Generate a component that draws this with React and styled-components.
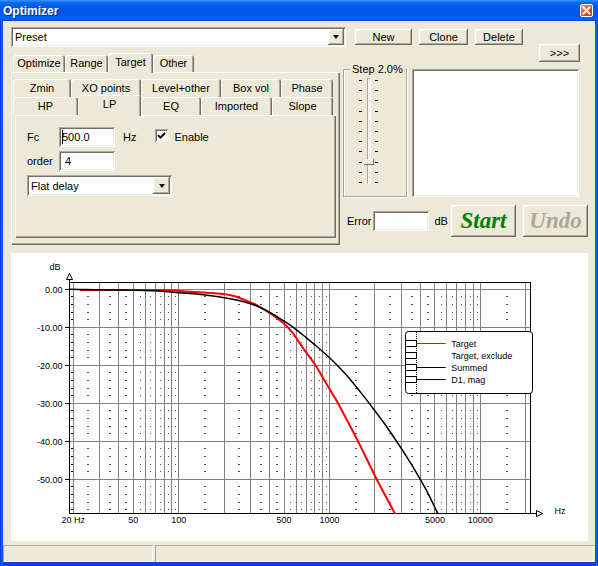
import React from 'react'
import styled, { createGlobalStyle } from 'styled-components'

const GlobalStyle = createGlobalStyle`
  html, body { margin: 0; padding: 0; background: #ffffff; }
  body { font-family: "Liberation Sans", Arial, sans-serif; font-size: 11px; color: #000; }
  * { box-sizing: border-box; }
`

// classic 3D edges
const raised = `
  box-shadow: inset -1px -1px 0 #716f64, inset 1px 1px 0 #ffffff, inset -2px -2px 0 #aca899, inset 2px 2px 0 #f1efe2;
`
const sunken = `
  box-shadow: inset 1px 1px 0 #aca899, inset -1px -1px 0 #ffffff, inset 2px 2px 0 #716f64, inset -2px -2px 0 #f1efe2;
`

const Window = styled.div`
  width: 598px;
  height: 566px;
  display: flex;
  flex-direction: column;
  background: linear-gradient(to right, #0831d9 0, #166aee 2px, #0842d6 3px, #0842d6 595px, #166aee 596px, #0831d9 598px);
`

const TitleBar = styled.div`
  height: 21px;
  flex: none;
  display: flex;
  align-items: center;
  justify-content: space-between;
  padding: 0 5px 0 3px;
  background: linear-gradient(to bottom, #3d95ff 0%, #0a6af5 12%, #0058ee 35%, #0055e8 70%, #0064fb 88%, #0043d8 100%);
  color: #fff;
  font-size: 12px;
  font-weight: bold;
  text-shadow: 1px 1px 0 #0a2a8a;
`

const CloseButton = styled.div`
  width: 13px;
  height: 13px;
  border: 1px solid #fff;
  border-radius: 2px;
  background: linear-gradient(135deg, #f29a7a 0%, #e0532a 45%, #c43a12 100%);
  display: flex;
  align-items: center;
  justify-content: center;
`

const Client = styled.div`
  flex: 1;
  margin: 0 3px 4px;
  background: #ece9d8;
  display: flex;
  flex-direction: column;
`

const Top = styled.div`
  display: flex;
  height: 224px;
  padding: 6px 0 0 8px;
`

const LeftCol = styled.div`
  width: 332px;
  display: flex;
  flex-direction: column;
`

const RightCol = styled.div`
  width: 245px;
  display: flex;
  flex-direction: column;
`

const ComboBox = styled.div`
  width: ${p => p.$w}px;
  height: ${p => p.$h}px;
  flex: none;
  background: #fff;
  display: flex;
  align-items: stretch;
  padding: 2px;
  ${sunken}
`

const ComboText = styled.span`
  flex: 1;
  display: flex;
  align-items: center;
  padding-left: 2px;
`

const DropButton = styled.div`
  width: ${p => p.$w || 16}px;
  background: #ece9d8;
  display: flex;
  align-items: center;
  justify-content: center;
  ${raised}
`

const DownArrow = styled.span`
  width: 0;
  height: 0;
  border-left: 3.5px solid transparent;
  border-right: 3.5px solid transparent;
  border-top: 4px solid #000;
`

const TabStrip = styled.div`
  display: flex;
  align-items: flex-end;
  height: ${p => p.$h}px;
  margin: ${p => p.$m || '0 0 0 2px'};
`

const Tab = styled.div`
  width: ${p => p.$w}px;
  height: ${p => p.$active ? p.$h + 3 : p.$h}px;
  flex: none;
  display: flex;
  align-items: center;
  justify-content: center;
  padding-bottom: ${p => p.$active ? 3 : 1}px;
  background: #ece9d8;
  border-radius: 3px 3px 0 0;
  box-shadow: inset 1px 1px 0 #ffffff, inset -1px 0 0 #716f64, inset -2px 0 0 #aca899;
  position: ${p => p.$active ? 'relative' : 'static'};
  z-index: ${p => p.$active ? 1 : 'auto'};
  margin-bottom: ${p => p.$active ? -1 : 0}px;
`

const Page = styled.div`
  width: ${p => p.$w}px;
  height: ${p => p.$h}px;
  padding: ${p => p.$pad};
  background: #ece9d8;
  box-shadow: inset 1px 1px 0 #ffffff, inset -1px -1px 0 #716f64, inset -2px -2px 0 #aca899;
`

const FieldRow = styled.div`
  display: flex;
  align-items: center;
  height: ${p => p.$h || 20}px;
  margin-top: ${p => p.$mt || 0}px;
`

const Label = styled.span`
  width: ${p => p.$w ? `${p.$w}px` : 'auto'};
  flex: none;
  margin-left: ${p => p.$ml || 0}px;
`

const TextField = styled.div`
  width: ${p => p.$w}px;
  height: 20px;
  flex: none;
  display: flex;
  align-items: center;
  padding-left: ${p => p.$pl || 3}px;
  margin-left: ${p => p.$ml || 0}px;
  background: #fff;
  ${sunken}
`

const Caret = styled.span`
  width: 1px;
  height: 14px;
  margin-right: -1px;
  background: #000;
`

const CheckBox = styled.div`
  width: 13px;
  height: 13px;
  flex: none;
  align-self: flex-start;
  margin: 2px 0 0 19px;
  background: #fff;
  display: flex;
  align-items: center;
  justify-content: center;
  ${sunken}
`

const Button = styled.button`
  width: ${p => p.$w}px;
  height: ${p => p.$h}px;
  flex: none;
  padding: 0;
  border: none;
  background: #ece9d8;
  font-family: "Liberation Sans", Arial, sans-serif;
  font-size: 11px;
  color: #000;
  margin-left: ${p => p.$ml || 0}px;
  ${raised}
`

const BigButton = styled(Button)`
  font-family: "Liberation Serif", "Times New Roman", serif;
  font-size: 23px;
  font-weight: bold;
  font-style: italic;
  color: ${p => p.$disabled ? '#aca899' : '#008000'};
`

const ButtonRow = styled.div`
  display: flex;
  gap: 7px;
  margin-top: 2px;
  padding-left: 12px;
`

const MoreRow = styled.div`
  display: flex;
  justify-content: flex-end;
  margin-top: -1px;
  padding-right: 8px;
`

const MiddleRow = styled.div`
  display: flex;
  height: 134px;
  margin-top: 1px;
`

const GroupBox = styled.div`
  width: 64px;
  height: 128px;
  margin-top: 6px;
  border: 1px solid #aca899;
  box-shadow: inset 1px 1px 0 #fff, 1px 1px 0 #fff;
`

const GroupTitle = styled.div`
  width: fit-content;
  height: 12px;
  line-height: 12px;
  margin: -7px 0 0 6px;
  padding: 0 2px;
  background: #ece9d8;
`

const Slider = styled.div`
  display: flex;
  height: 106px;
  margin-top: 3px;
  padding-left: 15px;
`

const TickCol = styled.div`
  width: 3px;
  display: flex;
  flex-direction: column;
  justify-content: space-between;
  padding: 2px 0 1px;
  margin-left: ${p => p.$ml || 0}px;
`

const Tick = styled.span`
  height: 1px;
  background: #000;
`

const Track = styled.div`
  width: 4px;
  margin-left: 5px;
  position: relative;
  background: #f4f3ee;
  border-left: 1px solid #aca899;
  border-top: 1px solid #aca899;
  border-right: 1px solid #fff;
  border-bottom: 1px solid #fff;
`

const Thumb = styled.div`
  position: absolute;
  top: ${p => p.$top}px;
  left: -4px;
  width: 10px;
  height: 6px;
  background: #ece9d8;
  box-shadow: inset -1px -1px 0 #716f64, inset 1px 1px 0 #fff;
`

const ListBox = styled.div`
  width: 167px;
  height: 128px;
  margin: 6px 0 0 5px;
  background: #fff;
  ${sunken}
`

const ErrorRow = styled.div`
  display: flex;
  align-items: center;
  height: 32px;
  margin-top: 8px;
  padding-left: 4px;
`

const ChartPanel = styled.div`
  width: 577px;
  height: 288px;
  margin: 8px 0 0 8px;
  background: #fff;
`

const StatusBar = styled.div`
  display: flex;
  height: 17px;
  margin-top: 4px;
  padding-right: 1px;
`

const StatusPane = styled.div`
  width: ${p => p.$w ? `${p.$w}px` : 'auto'};
  flex: ${p => p.$w ? 'none' : 1};
  margin-left: ${p => p.$ml || 0}px;
  box-shadow: inset 1px 1px 0 #aca899, inset -1px -1px 0 #ffffff;
`

/* ---------- chart ---------- */

const fx = f => 62.3 + 150.8 * Math.log10(f / 20)
const fy = db => 36.3 - 3.8 * db
const px = v => Math.floor(v) + 0.5

const PL = 58, PT = 29, PR = 519, PB = 260

const majorFreqs = []
for (const d of [10, 100, 1000]) for (let m = 2; m <= 10; m++) majorFreqs.push(m * d)
majorFreqs.push(20000)

const summed = [
  [18.8, 0], [60, -0.3], [100, -0.9], [150, -1.5], [220, -2.5], [300, -3.8], [360, -5.1],
  [420, -6.5], [490, -8.2], [575, -10], [700, -12.7], [850, -15.5], [1000, -18], [1150, -20.4],
  [1350, -23.4], [1600, -27], [1900, -30.8], [2300, -35.2], [2761, -39.8], [3300, -44.5],
  [3929, -49.5], [4500, -53.7], [5106, -58.2], [5800, -62.4],
]

const target = [
  [22.1, -0.2], [70, -0.2], [106, -0.5], [137, -0.8], [217, -1.5], [281, -3.0], [344, -4.6],
  [422, -6.8], [491, -8.8], [528, -10], [573, -11.6], [668, -15.5], [808, -20], [907, -23.4],
  [1057, -27.8], [1139, -30], [1545, -40], [2056, -50], [2706, -58.9], [3000, -62],
]

const toPath = data => {
  const p = data.map(([f, db]) => [fx(f), fy(db)])
  const r = v => v.toFixed(2)
  let d = `M${r(p[0][0])},${r(p[0][1])}`
  for (let i = 0; i < p.length - 1; i++) {
    const p0 = p[i - 1] || p[i], p1 = p[i], p2 = p[i + 1], p3 = p[i + 2] || p2
    const c1x = p1[0] + (p2[0] - p0[0]) / 6, c1y = p1[1] + (p2[1] - p0[1]) / 6
    const c2x = p2[0] - (p3[0] - p1[0]) / 6, c2y = p2[1] - (p3[1] - p1[1]) / 6
    d += ` C${r(c1x)},${r(c1y)} ${r(c2x)},${r(c2y)} ${r(p2[0])},${r(p2[1])}`
  }
  return d
}

const legendItems = [
  { name: 'Target', color: '#ff0000' },
  { name: 'Target, exclude', color: null },
  { name: 'Summed', color: '#000' },
  { name: 'D1, mag', color: '#000' },
]

const Chart = () => {
  const vLines = majorFreqs.map(f => px(fx(f)))
  const hLines = [0, -10, -20, -30, -40, -50].map(db => px(fy(db)))

  const minorRows = []
  for (let k = 1; k <= 29; k++) if (k % 5) minorRows.push(px(fy(-2 * k)))

  let dashes = ''
  majorFreqs.slice(0, -1).forEach((f, i) => {
    const next = majorFreqs[i + 1]
    const w = fx(next) - fx(f) < 12 ? 1 : 2
    const x = Math.round(fx((f + next) / 2)) - (w === 2 ? 1 : 0)
    minorRows.forEach(y => { dashes += `M${x},${y}h${w}` })
  })
  let axisTicks = ''
  minorRows.forEach(y => { axisTicks += `M60,${y}h2` })
  hLines.forEach(y => { axisTicks += `M54,${y}h4.5` })

  const xLabels = [[20, '20 Hz'], [50, '50'], [100, '100'], [500, '500'], [1000, '1000'], [5000, '5000'], [10000, '10000']]
  const yLabels = ['0.00', '-10.00', '-20.00', '-30.00', '-40.00', '-50.00']

  return (
    <svg width="577" height="288" viewBox="0 0 577 288" style={{ display: 'block' }}
      fontFamily='"Liberation Sans", Arial, sans-serif' fontSize="9">
      <defs>
        <clipPath id="plot">
          <rect x={PL} y={PT} width={PR - PL + 1} height={PB - PT + 1} />
        </clipPath>
      </defs>
      <g stroke="#808080" strokeWidth="1" shapeRendering="crispEdges">
        {vLines.map((x, i) => <line key={i} x1={x} y1={PT} x2={x} y2={PB} />)}
        {hLines.map((y, i) => <line key={i} x1={PL} y1={y} x2={PR} y2={y} />)}
      </g>
      <path d={dashes} stroke="#505050" strokeWidth="1" shapeRendering="crispEdges" />
      <path d={axisTicks} stroke="#000" strokeWidth="1" shapeRendering="crispEdges" />
      <g stroke="#000" strokeWidth="1" shapeRendering="crispEdges" fill="none">
        <line x1={PL} y1={PT + 0.5} x2={PR + 1} y2={PT + 0.5} />
        <line x1={PR + 0.5} y1={PT} x2={PR + 0.5} y2={PB} />
        <line x1={PL + 0.5} y1={20} x2={PL + 0.5} y2={PB + 1} />
        <line x1={PL} y1={PB + 0.5} x2={532} y2={PB + 0.5} />
      </g>
      <polygon points="55.5,26.5 61.5,26.5 58.5,20.5" fill="#fff" stroke="#000" strokeWidth="1" />
      <polygon points="525.5,257.5 525.5,263.5 531.5,260.5" fill="#fff" stroke="#000" strokeWidth="1" />

      <g clipPath="url(#plot)" fill="none" strokeLinejoin="round">
        <path d={toPath(target)} stroke="#ff0000" strokeWidth="2" />
        <path d={toPath(summed)} stroke="#000" strokeWidth="1.5" />
      </g>

      {yLabels.map((t, i) => (
        <text key={t} x="51.5" y={hLines[i] + 3} textAnchor="end">{t}</text>
      ))}
      <text x="44" y="17" textAnchor="middle">dB</text>
      {xLabels.map(([f, t]) => (
        <text key={t} x={fx(f)} y="269.5" textAnchor="middle">{t}</text>
      ))}
      <text x="543.5" y="260.5">Hz</text>

      <rect x="394.5" y="78.5" width="127" height="62" rx="3" fill="#fff" stroke="#000" />
      <line x1="405.5" y1="79" x2="405.5" y2="140" stroke="#000" strokeDasharray="1 1" />
      {legendItems.map((it, i) => {
        const c = 90.5 + 12 * i
        return (
          <g key={it.name}>
            <rect x="394.5" y={c - 3} width="11" height="6" fill="#fff" stroke="#000" />
            {it.color && <line x1="405.5" y1={c} x2="434.7" y2={c} stroke={it.color} />}
            <text x="440.3" y={c + 3.5}>{it.name}</text>
          </g>
        )
      })}
    </svg>
  )
}

/* ---------- dialog ---------- */

const outerTabs = [['Optimize', 52], ['Range', 43], ['Target', 45, true], ['Other', 41]]
const backTabs = [['Zmin', 58], ['XO points', 70], ['Level+other', 80], ['Box vol', 60], ['Phase', 52]]
const frontTabs = [['HP', 65], ['LP', 63, true], ['EQ', 60], ['Imported', 71], ['Slope', 61]]

const App = () => {
  return (
    <Window>
      <GlobalStyle />
      <TitleBar>
        <span>Optimizer</span>
        <CloseButton>
          <svg width="9" height="9" viewBox="0 0 9 9">
            <path d="M1.5 1.5 L7.5 7.5 M7.5 1.5 L1.5 7.5" stroke="#fff" strokeWidth="2" strokeLinecap="square" />
          </svg>
        </CloseButton>
      </TitleBar>
      <Client>
        <Top>
          <LeftCol>
            <ComboBox $w={335} $h={20}>
              <ComboText>Preset</ComboText>
              <DropButton><DownArrow /></DropButton>
            </ComboBox>
            <TabStrip $h={19} $m="6px 0 0 2px">
              {outerTabs.map(([t, w, a]) => (
                <Tab key={t} $w={w} $h={17} $active={a}>{t}</Tab>
              ))}
            </TabStrip>
            <Page $w={329} $h={173} $pad="7px 4px 7px 4px">
              <TabStrip $h={18} $m="0 0 0 -2px">
                {backTabs.map(([t, w]) => <Tab key={t} $w={w} $h={18}>{t}</Tab>)}
              </TabStrip>
              <TabStrip $h={18} $m="0 0 0 -2px">
                {frontTabs.map(([t, w, a]) => (
                  <Tab key={t} $w={w} $h={18} $active={a}>{t}</Tab>
                ))}
              </TabStrip>
              <Page $w={321} $h={123} $pad="12px 0 0 12px">
                <FieldRow>
                  <Label $w={32}>Fc</Label>
                  <TextField $w={56}><Caret />500.0</TextField>
                  <Label $ml={8}>Hz</Label>
                  <CheckBox>
                    <svg width="9" height="9" viewBox="0 0 9 9">
                      <path d="M1 4.2 L3.4 6.6 L8 2" stroke="#000" strokeWidth="1.9" fill="none" />
                    </svg>
                  </CheckBox>
                  <Label $ml={6}>Enable</Label>
                </FieldRow>
                <FieldRow $mt={4}>
                  <Label $w={32}>order</Label>
                  <TextField $w={56} $pl={6}>4</TextField>
                </FieldRow>
                <FieldRow $mt={4} $h={21}>
                  <ComboBox $w={145} $h={21}>
                    <ComboText>Flat delay</ComboText>
                    <DropButton $w={17}><DownArrow /></DropButton>
                  </ComboBox>
                </FieldRow>
              </Page>
            </Page>
          </LeftCol>

          <RightCol>
            <ButtonRow>
              <Button $w={57} $h={16}>New</Button>
              <Button $w={49} $h={16}>Clone</Button>
              <Button $w={48} $h={16}>Delete</Button>
            </ButtonRow>
            <MoreRow>
              <Button $w={41} $h={18}>&gt;&gt;&gt;</Button>
            </MoreRow>
            <MiddleRow>
              <GroupBox>
                <GroupTitle>Step 2.0%</GroupTitle>
                <Slider>
                  <TickCol>{Array.from({ length: 11 }, (_, i) => <Tick key={i} />)}</TickCol>
                  <Track><Thumb $top={80} /></Track>
                  <TickCol $ml={4}>{Array.from({ length: 11 }, (_, i) => <Tick key={i} />)}</TickCol>
                </Slider>
              </GroupBox>
              <ListBox />
            </MiddleRow>
            <ErrorRow>
              <Label>Error</Label>
              <TextField $w={56} $ml={2} />
              <Label $ml={5}>dB</Label>
              <BigButton $w={65} $h={32} style={{ marginLeft: 'auto' }}>Start</BigButton>
              <BigButton $w={65} $h={32} $ml={7} $disabled>Undo</BigButton>
            </ErrorRow>
          </RightCol>
        </Top>

        <ChartPanel>
          <Chart />
        </ChartPanel>

        <StatusBar>
          <StatusPane $w={150} />
          <StatusPane $ml={2} />
        </StatusBar>
      </Client>
    </Window>
  )
}

export default App
